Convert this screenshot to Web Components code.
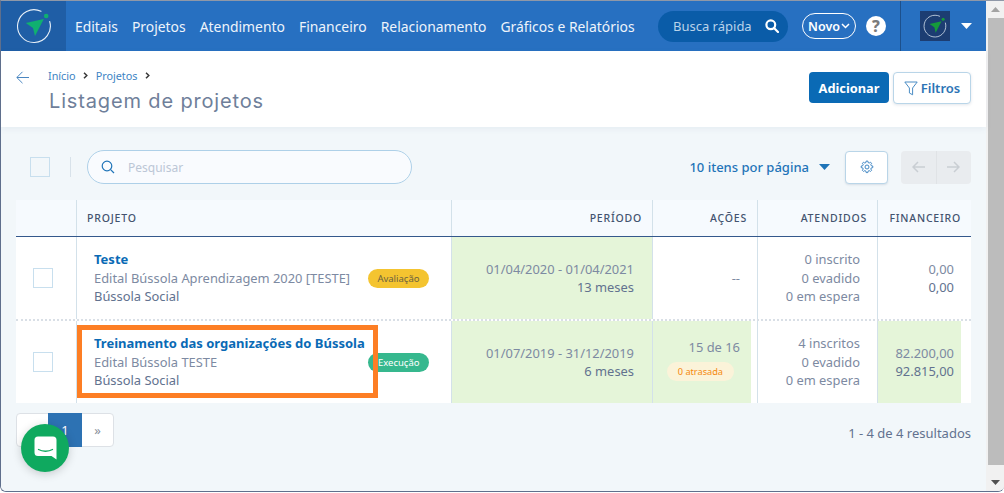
<!DOCTYPE html>
<html lang="pt-BR">
<head>
<meta charset="utf-8">
<title>Listagem de projetos</title>
<style>
  html, body { margin: 0; height: 100%; overflow: hidden; background: #fff; }
  body { font-family: "Noto Sans", "Open Sans", sans-serif; }
</style>
</head>
<body>
<app-window>
  <top-nav></top-nav>
  <page-header></page-header>
  <list-toolbar></list-toolbar>
  <project-table>
    <project-row>
      <project-info title-text="Teste" edital="Edital Bússola Aprendizagem 2020 [TESTE]" org="Bússola Social" status="Avaliação" tone="yellow"></project-info>
      <data-cell tint pad="18"><div>01/04/2020 - 01/04/2021</div><div class="dark">13 meses</div></data-cell>
      <data-cell><div>--</div></data-cell>
      <data-cell><div>0 inscrito</div><div>0 evadido</div><div>0 em espera</div></data-cell>
      <data-cell><div>0,00</div><div class="dark">0,00</div></data-cell>
    </project-row>
    <project-row>
      <project-info title-text="Treinamento das organizações do Bússola" edital="Edital Bússola TESTE" org="Bússola Social" status="Execução" tone="green" marked></project-info>
      <data-cell tint pad="18"><div>01/07/2019 - 31/12/2019</div><div class="dark">6 meses</div></data-cell>
      <data-cell tint short="6"><div>15 de 16</div><late-tag>0 atrasada</late-tag></data-cell>
      <data-cell><div>4 inscritos</div><div>0 evadido</div><div>0 em espera</div></data-cell>
      <data-cell tint short="10"><div>82.200,00</div><div class="dark">92.815,00</div></data-cell>
    </project-row>
  </project-table>
  <pager-bar></pager-bar>
  <chat-bubble></chat-bubble>
</app-window>

<script>
const LOGO = (ring, arrow, dot) => `
  <svg viewBox="0 0 36 36" width="100%" height="100%" fill="none">
    <path d="M25 3.300A16.400 16.400 0 1 0 33.700 13.500" stroke="${ring}" stroke-width="1.100" stroke-linecap="round"/>
    <circle cx="30.200" cy="8" r="2.300" fill="${dot}"/>
    <path d="M9.800 15 27.800 11 19 28 17 20z" fill="${arrow}"/>
  </svg>`;

class AppWindow extends HTMLElement {
  connectedCallback() {
    this.attachShadow({ mode: 'open' }).innerHTML = `
      <style>
        :host { display: flex; width: 1004px; height: 492px; box-sizing: border-box; position: relative;
          border-top: 1px solid #8f98a8; border-left: 1px solid #5f6f8c; border-bottom: 1px solid #5f6f8c; border-radius: 0 0 6px 6px; overflow: hidden; }
        .page { flex: 1; min-width: 0; position: relative; background: #f2f7fa; }
        .bar { width: 18px; flex: none; background: #f1f1f1; display: flex; flex-direction: column; align-items: center; }
        .arrow { height: 17px; width: 100%; display: flex; align-items: center; justify-content: center; flex: none; }
        .thumb { flex: 1; width: 16px; background: #bcbcbc; margin: 0 0 9px 2px; }
      </style>
      <div class="page"><slot></slot></div>
      <div class="bar">
        <div class="arrow"><svg width="9" height="5"><path d="M0 5 4.500 0 9 5z" fill="#a3a3a3"/></svg></div>
        <div class="thumb"></div>
        <div class="arrow"><svg width="9" height="5"><path d="M0 0 4.500 5 9 0z" fill="#505050"/></svg></div>
      </div>`;
  }
}

class TopNav extends HTMLElement {
  connectedCallback() {
    const links = ['Editais', 'Projetos', 'Atendimento', 'Financeiro', 'Relacionamento', 'Gráficos e Relatórios'];
    this.attachShadow({ mode: 'open' }).innerHTML = `
      <style>
        :host { display: flex; align-items: center; height: 50px; background: #2770c1; color: #fff; font-size: 13.900px; }
        .logo { width: 65px; height: 100%; background: #1f5ea6; display: flex; align-items: center; justify-content: center; flex: none; }
        .logo div { width: 36px; height: 36px; }
        nav { display: flex; gap: 14px; margin-left: 9px; color: #eef4fb; white-space: nowrap; width: 561px; flex: none; }
        .search { margin-left: 22px; width: 130px; height: 31px; border-radius: 16px; background: #0a5ca8; display: flex; align-items: center;
          justify-content: space-between; box-sizing: border-box; padding: 0 9px 0 15px; color: #b9d3ea; font-size: 13px; white-space: nowrap; flex: none; }
        .novo { margin-left: 14px; width: 54px; height: 26px; box-sizing: border-box; border: 1px solid #fff; border-radius: 13px; display: flex; align-items: center;
          justify-content: center; gap: 1px; font-size: 12.500px; font-weight: 600; flex: none; }
        .help { margin-left: 10px; width: 20px; height: 20px; border-radius: 50%; background: #fff; color: #7b7b7b; font-size: 16px; font-weight: 800;
          display: flex; align-items: center; justify-content: center; flex: none; line-height: 1; }
        .user { margin-left: 14px; height: 100%; border-left: 1px solid #1c508c; padding-left: 19px; display: flex; align-items: center; gap: 11px; flex: none; }
        .avatar { width: 30px; height: 30px; background: #1c3d72; padding: 3px; box-sizing: border-box; }
      </style>
      <div class="logo"><div>${LOGO('#e8f0f8', '#10b070', '#10b070')}</div></div>
      <nav>${links.map(l => `<span>${l}</span>`).join('')}</nav>
      <div class="search"><span>Busca rápida</span>
        <svg width="14" height="14" viewBox="0 0 14 14" fill="none" stroke="#fff" stroke-width="2.200"><circle cx="5.800" cy="5.800" r="4.400"/><path d="M9 9l4 4" stroke-linecap="round"/></svg>
      </div>
      <div class="novo"><span>Novo</span><svg width="9" height="6" viewBox="0 0 9 6" fill="none" stroke="#fff" stroke-width="1.500"><path d="M1 1l3.500 3.500L8 1"/></svg></div>
      <div class="help">?</div>
      <div class="user">
        <div class="avatar">${LOGO('#e8f0f8', '#159a3a', '#159a3a')}</div>
        <svg width="11" height="6"><path d="M0 0h11L5.500 6z" fill="#fff"/></svg>
      </div>`;
  }
}

class PageHeader extends HTMLElement {
  connectedCallback() {
    const chevron = '<svg width="5" height="7" viewBox="0 0 5 7" fill="none" stroke="#3a3a3a" stroke-width="1.500"><path d="M1 .8 3.800 3.500 1 6.200"/></svg>';
    this.attachShadow({ mode: 'open' }).innerHTML = `
      <style>
        :host { display: flex; height: 76px; background: #fff; box-sizing: border-box; padding: 16px 15px 0 15px; box-shadow: 0 2px 6px rgba(90,120,150,.08); position: relative; }
        .back { width: 33px; flex: none; }
        .crumbs { font-size: 10.800px; color: #3d84c4; display: flex; align-items: center; gap: 7.500px; height: 16px; margin-left: -1px; }
        h1 { margin: 6px 0 0; font: 400 20px Inter, "Noto Sans", sans-serif; letter-spacing: .85px; color: #6f7f9a; white-space: nowrap; }
        .main { flex: 1; }
        .actions { display: flex; gap: 4px; margin-top: 5px; height: 32px; }
        .btn { box-sizing: border-box; height: 31px; border-radius: 4px; display: flex; align-items: center; justify-content: center; font-size: 12.800px; font-weight: 700; }
        .add { width: 80px; background: #0a6ab5; color: #fff; }
        .filter { width: 78px; height: 32px; background: #fff; color: #2c74b5; font-weight: 600; font-size: 13px; border: 1px solid #b9d5e8; gap: 3px; box-shadow: 0 1px 3px rgba(60,90,120,.15); }
      </style>
      <div class="back"><svg width="13" height="13" viewBox="0 0 13 13" fill="none" stroke="#4a86c0" stroke-width="1"><path d="M13 6.500H1M6.500 .8 .8 6.500l5.700 5.700"/></svg></div>
      <div class="main">
        <div class="crumbs"><span>Início</span>${chevron}<span>Projetos</span>${chevron}</div>
        <h1>Listagem de projetos</h1>
      </div>
      <div class="actions">
        <div class="btn add">Adicionar</div>
        <div class="btn filter">
          <svg width="14" height="15" viewBox="0 0 14 15" fill="none" stroke="#4a8cc4" stroke-width="1"><path d="M.8 1h12.400L8.600 7v6.800L5.400 12V7z" stroke-linejoin="round"/></svg>
          <span>Filtros</span>
        </div>
      </div>`;
  }
}

class ListToolbar extends HTMLElement {
  connectedCallback() {
    this.attachShadow({ mode: 'open' }).innerHTML = `
      <style>
        :host { display: flex; align-items: center; height: 34px; margin: 23px 15px 16px 29px; color: #1f74b8; }
        .check { width: 20px; height: 20px; box-sizing: border-box; border: 1px solid #c8dfee; flex: none; }
        .sep { width: 1px; height: 20px; background: #d8e2ea; margin: 0 16px 0 20px; flex: none; }
        .search { width: 325px; height: 34px; box-sizing: border-box; border: 1px solid #aed0e8; border-radius: 17px; background: #f9fbfe;
          display: flex; align-items: center; gap: 13px; padding-left: 13px; color: #bcc7d6; font-size: 12px; flex: none; }
        .per { margin-left: auto; display: flex; align-items: center; gap: 10px; font-size: 13px; font-weight: 500; white-space: nowrap; }
        .gear { margin-left: 15px; width: 43px; height: 33px; box-sizing: border-box; background: #fff; border: 1px solid #b9d5e8; border-radius: 4px;
          display: flex; align-items: center; justify-content: center; box-shadow: 0 1px 2px rgba(60,90,120,.15); }
        .arrows { margin-left: 13px; width: 70px; height: 33px; display: flex; background: #e9ecef; border-radius: 4px; }
        .arrows div { flex: 1; display: flex; align-items: center; justify-content: center; }
        .arrows div + div { border-left: 1px solid #e0e3e6; }
      </style>
      <div class="check"></div><div class="sep"></div>
      <div class="search">
        <svg width="14" height="14" viewBox="0 0 14 14" fill="none" stroke="#1f74b8" stroke-width="1.200"><circle cx="6" cy="6" r="4.800"/><path d="M9.600 9.600 13 13"/></svg>
        <span>Pesquisar</span>
      </div>
      <div class="per"><span>10 itens por página</span><svg width="11" height="6"><path d="M0 0h11L5.500 6z" fill="#1f74b8"/></svg></div>
      <div class="gear">
        <svg width="14" height="14" viewBox="0 0 24 24" fill="none" stroke="#3f86c2" stroke-width="1.700" stroke-linejoin="round"><circle cx="12" cy="12" r="3.400"/><path d="M10.600 1.800h2.800l.5 2.600 1.900.8 2.200-1.400 1.900 1.900-1.400 2.200.8 1.900 2.600.5v2.800l-2.600.5-.8 1.900 1.400 2.200-1.900 1.900-2.200-1.400-1.900.8-.5 2.600h-2.800l-.5-2.600-1.900-.8-2.200 1.400-1.900-1.900 1.400-2.200-.8-1.900-2.600-.5v-2.800l2.600-.5.8-1.900-1.400-2.200 1.900-1.900 2.200 1.400 1.900-.8z"/></svg>
      </div>
      <div class="arrows">
        <div><svg width="13" height="12" viewBox="0 0 13 12" fill="none" stroke="#c9ced3" stroke-width="1.500"><path d="M13 6H1.500M6 1 1 6l5 5"/></svg></div>
        <div><svg width="13" height="12" viewBox="0 0 13 12" fill="none" stroke="#c9ced3" stroke-width="1.500"><path d="M0 6h11.500M7 1l5 5-5 5"/></svg></div>
      </div>`;
  }
}

const COLS = '60px 375px 201px 105px 120px 94px';

class ProjectTable extends HTMLElement {
  connectedCallback() {
    const heads = [['', ''], ['PROJETO', 'left'], ['PERÍODO'], ['AÇÕES'], ['ATENDIDOS'], ['FINANCEIRO']];
    this.attachShadow({ mode: 'open' }).innerHTML = `
      <style>
        :host { display: block; margin: 0 15px; --cols: ${COLS}; }
        .head { display: grid; grid-template-columns: var(--cols); height: 37px; background: #f6fafe; border-bottom: 1px solid #34588c; box-sizing: border-box; }
        .head div { display: flex; align-items: center; justify-content: flex-end; padding: 0 10px; border-left: 1px solid #d3e1ea;
          font-size: 10.500px; font-weight: 500; letter-spacing: .8px; color: #43536f; }
        .head div:first-child { border-left: 0; }
        .head div.left { justify-content: flex-start; }
      </style>
      <div class="head">${heads.map(h => `<div class="${h[1] || ''}">${h[0]}</div>`).join('')}</div>
      <slot></slot>`;
  }
}

class ProjectRow extends HTMLElement {
  connectedCallback() {
    this.attachShadow({ mode: 'open' }).innerHTML = `
      <style>
        :host { display: grid; grid-template-columns: var(--cols); height: 82px; background: #fff; }
        :host(:not(:last-child)) { height: 84px; border-bottom: 2px dotted #d9dfe6; box-sizing: border-box; }
        .check { display: flex; align-items: center; justify-content: center; padding-right: 6px; }
        .check div { width: 20px; height: 20px; box-sizing: border-box; border: 1px solid #c8dfee; }
      </style>
      <div class="check"><div></div></div>
      <slot></slot>`;
  }
}

class ProjectInfo extends HTMLElement {
  connectedCallback() {
    const a = n => this.getAttribute(n);
    this.attachShadow({ mode: 'open' }).innerHTML = `
      <style>
        :host { display: flex; align-items: center; position: relative; border-left: 1px solid #d3e1ea; padding-left: 17px; padding-right: 22px;
          font-size: 12.900px; line-height: 18.500px; color: #7d8aa2; white-space: nowrap; }
        .text { flex: 1; }
        .title { color: #0a6ab5; font-weight: 700; font-size: 13px; }
        .org { color: #62728f; }
        .badge { height: 19px; border-radius: 10px; font-size: 9.500px; line-height: 19px; padding: 0 9.500px; flex: none; }
        .yellow { background: #f4c430; color: #6b6240; }
        .green { background: #36b88e; color: #fff; }
        .mark { position: absolute; left: 0; top: 4px; width: 301px; height: 73px; box-sizing: border-box; border: 5px solid #fd7e24; }
      </style>
      <div class="text">
        <div class="title">${a('title-text')}</div>
        <div>${a('edital')}</div>
        <div class="org">${a('org')}</div>
      </div>
      <span class="badge ${a('tone')}">${a('status')}</span>
      ${this.hasAttribute('marked') ? '<div class="mark"></div>' : ''}`;
  }
}

class DataCell extends HTMLElement {
  connectedCallback() {
    const short = +this.getAttribute('short') || 0;
    const pad = +this.getAttribute('pad') || 17;
    this.attachShadow({ mode: 'open' }).innerHTML = `
      <style>
        :host { display: flex; border-left: 1px solid #d3e1ea; min-width: 0; font-size: 12.900px; line-height: 18.500px; color: #7d8aa2; white-space: nowrap; text-align: right; }
        .fill { flex: 1; margin-right: ${short}px; display: flex; flex-direction: column; justify-content: center; align-items: flex-end;
          padding-right: ${pad - short}px; ${this.hasAttribute('tint') ? 'background: #e5f5d9;' : ''} }
        ::slotted(.dark) { color: #62728f; }
      </style>
      <div class="fill"><slot></slot></div>`;
  }
}

class LateTag extends HTMLElement {
  connectedCallback() {
    this.attachShadow({ mode: 'open' }).innerHTML = `
      <style>
        :host { display: block; margin: 6px 6px 5px 0; background: #fbf3d9; color: #f5890f; font-size: 9.200px; line-height: 19px; height: 19px; padding: 0 11px; border-radius: 10px; }
      </style><slot></slot>`;
  }
}

class PagerBar extends HTMLElement {
  connectedCallback() {
    this.attachShadow({ mode: 'open' }).innerHTML = `
      <style>
        :host { display: flex; align-items: center; justify-content: space-between; margin: 10px 15px 0; height: 34px; }
        .pages { display: flex; height: 34px; box-sizing: border-box; border: 1px solid #dde1e6; border-radius: 4px; background: #fff; }
        .pages div { width: 31px; display: flex; align-items: center; justify-content: center; font-size: 13px; color: #8a8f99; }
        .pages .on { width: 34px; background: #2d72b3; color: #fff; margin: -1px 0; }
        .count { font-size: 13px; color: #62728f; margin-top: 6px; }
      </style>
      <div class="pages"><div></div><div class="on">1</div><div>»</div></div>
      <div class="count">1 - 4 de 4 resultados</div>`;
  }
}

class ChatBubble extends HTMLElement {
  connectedCallback() {
    this.attachShadow({ mode: 'open' }).innerHTML = `
      <style>
        :host { position: absolute; left: 20px; top: 423px; width: 48px; height: 48px; border-radius: 50%; background: #0fa95f;
          display: flex; align-items: center; justify-content: center; box-shadow: 0 2px 10px rgba(0,0,0,.18); }
      </style>
      <svg width="23" height="24" viewBox="0 0 23 24"><path d="M4 .5h15A3.500 3.500 0 0 1 22.500 4v19.500L17.500 20H4A3.500 3.500 0 0 1 .5 16.500V4A3.500 3.500 0 0 1 4 .5z" fill="#fff"/><path d="M4.500 13.500c4 2.300 10 2.300 14 0" fill="none" stroke="#0fa95f" stroke-width="1.300" stroke-linecap="round"/></svg>`;
  }
}

customElements.define('app-window', AppWindow);
customElements.define('top-nav', TopNav);
customElements.define('page-header', PageHeader);
customElements.define('list-toolbar', ListToolbar);
customElements.define('project-table', ProjectTable);
customElements.define('project-row', ProjectRow);
customElements.define('project-info', ProjectInfo);
customElements.define('data-cell', DataCell);
customElements.define('late-tag', LateTag);
customElements.define('pager-bar', PagerBar);
customElements.define('chat-bubble', ChatBubble);
</script>
</body>
</html>
